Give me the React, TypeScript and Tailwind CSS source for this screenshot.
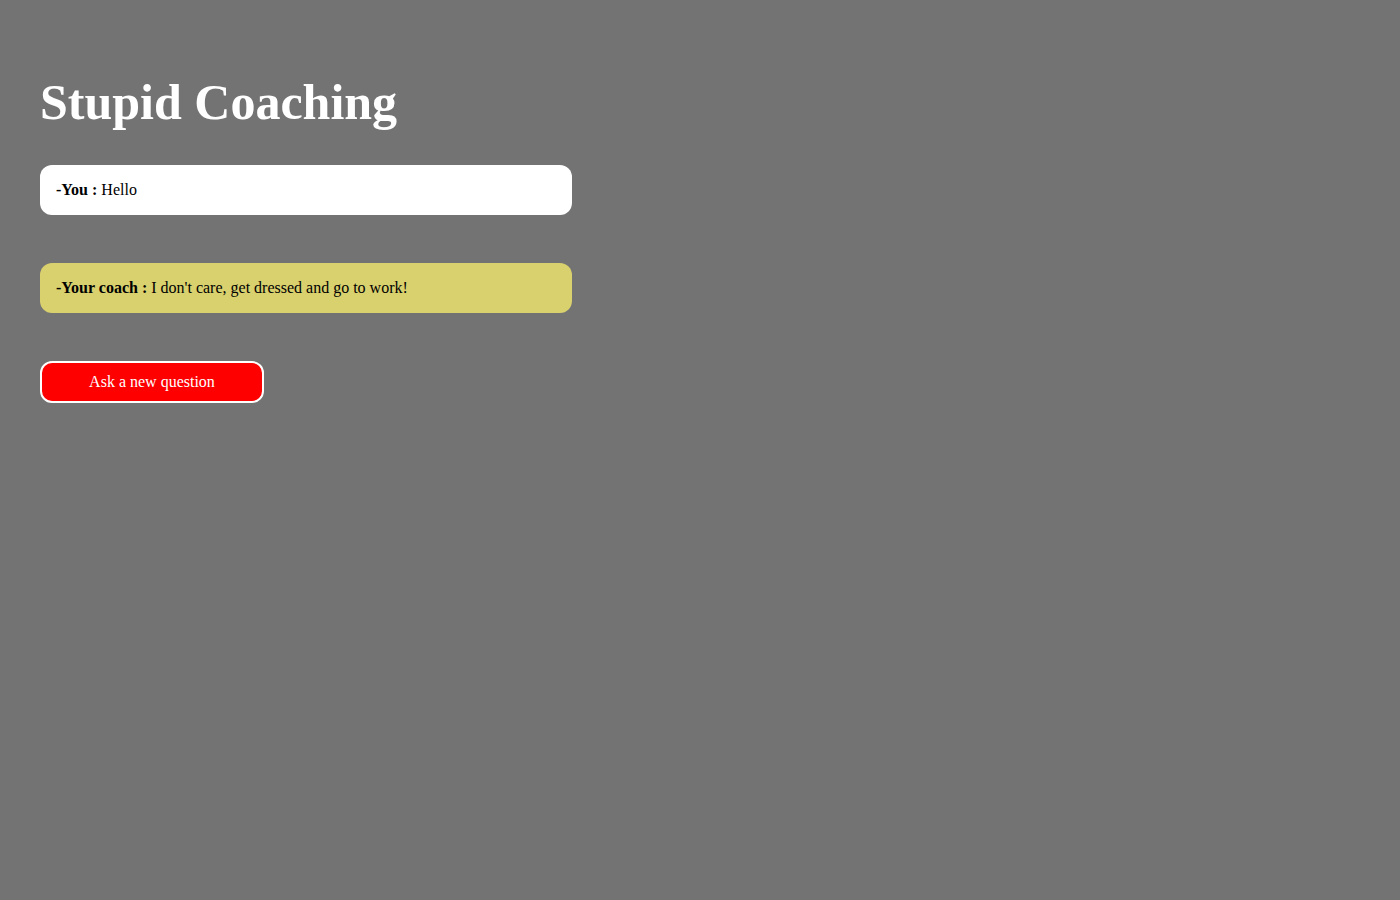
export default function App() {
  return (
    <div className="min-h-[900px] bg-[#737373] px-10 pt-[75px] font-['Liberation_Serif',serif]">
      <h1 className="text-[50px] font-bold leading-[55px] text-white">Stupid Coaching</h1>

      <div className="mt-[35px] flex w-[532px] flex-col gap-12">
        <div className="flex h-[50px] items-center rounded-xl bg-white px-4 text-base text-black">
          <span className="font-bold">-You :</span>&nbsp;Hello
        </div>
        <div className="flex h-[50px] items-center rounded-xl bg-[#d9d06e] px-4 text-base text-black">
          <span className="font-bold">-Your coach :</span>&nbsp;I don't care, get dressed and go to work!
        </div>
      </div>

      <button className="mt-12 h-[42px] w-[224px] rounded-xl border-2 border-white bg-[#ff0000] text-base text-white">
        Ask a new question
      </button>
    </div>
  )
}
